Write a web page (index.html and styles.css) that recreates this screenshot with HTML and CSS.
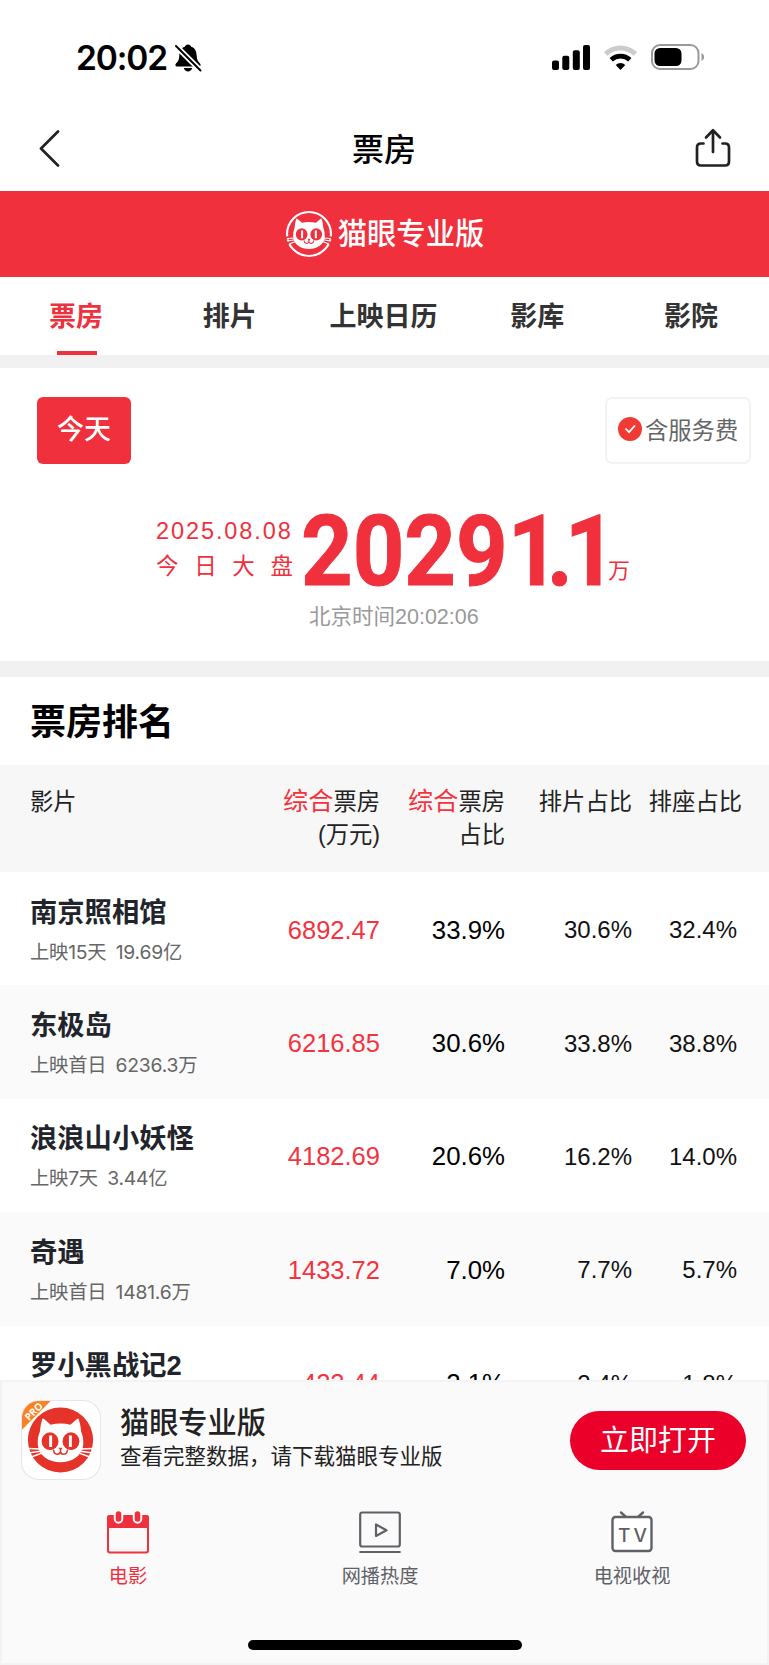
FILE: index.html
```html
<!DOCTYPE html>
<html lang="zh-CN">
<head>
  <meta charset="UTF-8">
  <meta name="viewport" content="width=device-width, initial-scale=1">
  <title>票房</title>
  <link rel="stylesheet" href="styles.css">
</head>
<body>
  <svg class="defs" width="0" height="0">
    <symbol id="cat" viewBox="0 0 80 80">
      <path fill="#fff" d="M21 19Q21.500 17.800 22.800 18.800L29.500 24.500Q39.500 22 49.500 24.500L56.200 18.800Q57.500 17.800 58 19Q60 25 60.500 32Q63 37.500 62.500 45C61.500 56 51 62.500 39.500 62.500S17.500 56 16.500 45Q16 37.500 18.500 32Q19 25 21 19Z"/>
      <g fill="currentColor">
        <ellipse cx="28.900" cy="41.200" rx="8.500" ry="9"/>
        <ellipse cx="50.100" cy="41.200" rx="8.500" ry="9"/>
        <path d="M37.300 47.800h4.400l-2.200 2.600z"/>
      </g>
      <path d="M39.500 49v2.500M32.500 50.500c.5 5 6.500 5 7 1c.5 4 6.500 4 7-1" fill="none" stroke="currentColor" stroke-width="1.500" stroke-linecap="round"/>
      <path d="M29.500 35.500v11.500M49.500 35.500v11.500" stroke="#fff" stroke-width="3"/>
    </symbol>
  </svg>

  <div class="status">
    <div class="time">20:02
      <svg width="28" height="30" viewBox="0 0 28 30">
        <path d="M14 1.500c-1.800 0-2.800 1-3.200 2.300C6.800 5 5.500 8.500 5.300 13c-.2 4-1.300 5.500-3.300 7.500-1.200 1.300-.6 3 1 3h22c1.600 0 2.200-1.700 1-3-2-2-3.100-3.500-3.300-7.500-.2-4.500-1.500-8-5.500-9.200C16.800 2.500 15.800 1.500 14 1.500zM9.800 25h8.400c-.6 2.300-2.200 3.500-4.200 3.500S10.400 27.300 9.800 25z"/>
        <path d="M1.500 2.500L27 28" stroke="#fff" stroke-width="5.500"/>
        <path d="M2 3L26.500 27.500" stroke="#000" stroke-width="2" stroke-linecap="round"/>
      </svg>
    </div>
    <div class="signals">
      <svg width="38" height="25" viewBox="0 0 38 25">
        <rect x="0" y="15.500" width="7" height="9.500" rx="2"/>
        <rect x="10.300" y="10.700" width="7" height="14.300" rx="2"/>
        <rect x="20.800" y="5.200" width="7" height="19.800" rx="2"/>
        <rect x="31" y="0" width="7" height="25" rx="2"/>
      </svg>
      <svg width="33" height="25" viewBox="0 0 33 25">
        <path d="M1.600 9a21.500 21.500 0 0 1 29.800 0" fill="none" stroke="#ccc" stroke-width="5"/>
        <path d="M7.200 14.800a13.500 13.500 0 0 1 18.600 0" fill="none" stroke="#000" stroke-width="4.800"/>
        <path d="M16.500 25l-4.800-5a6.800 6.800 0 0 1 9.600 0z"/>
      </svg>
      <svg width="54" height="26" viewBox="0 0 54 26">
        <rect x="1" y="1" width="46.500" height="24" rx="8" fill="none" stroke="#999" stroke-width="2"/>
        <rect x="3.500" y="4" width="27" height="18" rx="5.500"/>
        <path d="M50.500 9c3.500 1.500 3.500 6.500 0 8z" fill="#999"/>
      </svg>
    </div>
  </div>

  <header class="nav">
    <svg width="22" height="37" viewBox="0 0 22 37"><path d="M20 1.500L3 18.500 20 35.500" fill="none" stroke="#222" stroke-width="2.700" stroke-linecap="round" stroke-linejoin="round"/></svg>
    <h1>票房</h1>
    <svg width="36" height="40" viewBox="0 0 36 40"><path d="M8.500 15.500H6Q2 15.500 2 19.500V33.500Q2 37.500 6 37.500H30Q34 37.500 34 33.500V19.500Q34 15.500 30 15.500H27.500M18 24V2.500M11 9.500L18 2.300 25 9.500" fill="none" stroke="#222" stroke-width="2.700" stroke-linecap="round" stroke-linejoin="round"/></svg>
  </header>

  <div class="brand">
    <svg width="48" height="48" viewBox="0 0 48 48">
      <circle cx="24" cy="24" r="22" fill="none" stroke="#fff" stroke-width="2.200"/>
      <path d="M0 28l9.500-.5M1 33.500l9.500-2.500M48 28l-9.500-.5M47 33.500l-9.500-2.500" stroke="#f0303d" stroke-width="3"/>
      <path d="M2 28.500l8-.5M3 31l8-1.500M4 34l8-3M46 28.500l-8-.5M45 31l-8-1.500M44 34l-8-3" stroke="#fff" stroke-width="1.100"/>
      <use href="#cat" x="-3.200" y="-4.500" width="55" height="56"/>
    </svg>
    <span>猫眼专业版</span>
  </div>

  <nav class="tabs">
    <a class="active">票房</a>
    <a>排片</a>
    <a>上映日历</a>
    <a>影库</a>
    <a>影院</a>
  </nav>

  <section class="overview">
    <div class="filters">
      <button class="today">今天</button>
      <div class="fee">
        <svg width="24" height="24" viewBox="0 0 24 24"><circle cx="12" cy="12" r="12" fill="#f23a34"/><path d="M7.500 11.500l3.500 3.700 6-6.700" fill="none" stroke="#fff" stroke-width="1.800"/></svg>
        <span>含服务费</span>
      </div>
    </div>
    <div class="total">
      <div class="day">
        <p class="date">2025.08.08</p>
        <p class="label"><span>今</span><span>日</span><span>大</span><span>盘</span></p>
      </div>
      <div class="num"><span>2029<i class="one">1</i><i class="dot">.</i>1</span></div>
      <div class="unit">万</div>
    </div>
    <p class="clock">北京时间20:02:06</p>
  </section>

  <section class="ranking">
    <h2>票房排名</h2>
    <div class="row thead">
      <div>影片</div>
      <div><em>综合</em>票房<br>(万元)</div>
      <div><em>综合</em>票房<br>占比</div>
      <div>排片占比</div>
      <div>排座占比</div>
    </div>
    <div class="row">
      <div><h3>南京照相馆</h3><p>上映15天 19.69亿</p></div>
      <div class="box">6892.47</div><div class="share">33.9%</div><div>30.6%</div><div>32.4%</div>
    </div>
    <div class="row">
      <div><h3>东极岛</h3><p>上映首日 6236.3万</p></div>
      <div class="box">6216.85</div><div class="share">30.6%</div><div>33.8%</div><div>38.8%</div>
    </div>
    <div class="row">
      <div><h3>浪浪山小妖怪</h3><p>上映7天 3.44亿</p></div>
      <div class="box">4182.69</div><div class="share">20.6%</div><div>16.2%</div><div>14.0%</div>
    </div>
    <div class="row">
      <div><h3>奇遇</h3><p>上映首日 1481.6万</p></div>
      <div class="box">1433.72</div><div class="share">7.0%</div><div>7.7%</div><div>5.7%</div>
    </div>
    <div class="row">
      <div><h3>罗小黑战记2</h3></div>
      <div class="box">422.44</div><div class="share">2.1%</div><div>2.4%</div><div>1.8%</div>
    </div>
  </section>

  <footer>
    <div class="app">
      <div class="app-icon">
        <svg width="78" height="78" viewBox="0.5 0.5 79 79">
          <circle cx="39.500" cy="40" r="33" fill="#e5332a"/>
          <path d="M0 0H30L0 30z" fill="#fb8224"/>
          <path d="M7 48.500l11 .5M8.500 53l10.500-1.500M10.500 57l9.500-3.500M72 48.500l-11 .5M70.500 53l-10.500-1.500M68.500 57l-9.500-3.500" stroke="#fff" stroke-width="1.500"/>
          <use href="#cat" width="80" height="80"/>
          <text x="0" y="0" transform="translate(7.500 21) rotate(-45)">PRO</text>
        </svg>
      </div>
      <div class="app-text">
        <h4>猫眼专业版</h4>
        <p>查看完整数据，请下载猫眼专业版</p>
      </div>
      <button class="open">立即打开</button>
    </div>
    <div class="bottom-tabs">
      <a class="active">
        <svg width="42" height="43" viewBox="0 0 42 43">
          <rect x="1" y="5" width="40" height="36.500" rx="2" fill="#fafafa" stroke="#f0303d" stroke-width="2"/>
          <path d="M0 17V7q0-3 3-3h36q3 0 3 3v10z" fill="#f0303d"/>
          <path d="M11.500 3.500v4.500M30.500 3.500v4.500" stroke="#fafafa" stroke-width="9.500" stroke-linecap="round"/>
          <path d="M11.500 3v5M30.500 3v5" stroke="#f0303d" stroke-width="5.500" stroke-linecap="round"/>
        </svg>
        <span>电影</span>
      </a>
      <a>
        <svg width="42" height="43" viewBox="0 0 42 43" fill="none" stroke="#5f6166" stroke-width="2.200" stroke-linecap="round" stroke-linejoin="round">
          <rect x="1.200" y="1.500" width="39.600" height="34" rx="2"/>
          <path d="M17 13.500v11.500l10.500-5.700zM1.200 41h39.600"/>
        </svg>
        <span>网播热度</span>
      </a>
      <a>
        <svg class="tv" width="42" height="43" viewBox="0 0 42 43" fill="none" stroke="#5f6166" stroke-width="2.400" stroke-linecap="round" stroke-linejoin="round">
          <path d="M10 1.500l5 4.500M32 1.500l-5 4.500"/>
          <rect x="1.500" y="6" width="39" height="34" rx="3" fill="#fff"/>
          <text x="7" y="30.500">TV</text>
        </svg>
        <span>电视收视</span>
      </a>
    </div>
    <div class="home-bar"></div>
  </footer>
</body>
</html>
```
FILE: styles.css
```css
* { box-sizing: border-box; }
body {
  font-family: "Liberation Sans", "Noto Sans CJK SC", sans-serif;
  margin: 0;
  height: 1665px;
  overflow: hidden;
  position: relative;
  background: #fff;
  color: #222;
}
h1, h2, h3, h4, p { margin: 0; }
svg { display: block; flex: none; }
button { border: 0; padding: 0; font-family: inherit; color: #fff; }
.defs { position: absolute; }

.status {
  height: 114px;
  padding: 0 64px 0 76px;
  display: flex;
  justify-content: space-between;
  align-items: center;
}
.time {
  display: flex;
  align-items: center;
  gap: 7px;
  font: 600 33.5px/40px Inter, sans-serif;
  color: #000;
  letter-spacing: -1.1px;
  padding-top: 2px;
}
.signals { display: flex; align-items: center; gap: 14px; }

.nav {
  height: 77px;
  padding: 0 38px 9px 38px;
  display: flex;
  justify-content: space-between;
  align-items: center;
}
.nav h1 { font-size: 32px; line-height: 40px; font-weight: 500; color: #000; padding: 3px 0 0 13px; }

.brand {
  height: 86px;
  background: #f0303d;
  color: #fff;
  display: flex;
  justify-content: center;
  align-items: center;
  gap: 5px;
}
.brand svg { color: #f0303d; }
.brand span { font-size: 29.3px; line-height: 40px; font-weight: 500; }

.tabs {
  display: flex;
  height: 91px;
  border-bottom: 13px solid #f1f1f1;
}
.tabs a {
  flex: 1;
  text-align: center;
  font-size: 27px;
  line-height: 81px;
  height: 78px;
  font-weight: bold;
  color: #333;
  text-indent: -2px;
}
.tabs .active { color: #f0303d; }
.tabs .active::after {
  content: "";
  display: block;
  width: 40px;
  height: 4px;
  margin: -7px auto 0;
  background: #f0303d;
}

.overview { height: 309px; border-bottom: 16px solid #f1f1f1; padding-top: 29px; }
.filters { display: flex; justify-content: space-between; padding: 0 18px 0 37px; }
.today {
  width: 94px;
  height: 67px;
  border-radius: 6px;
  background: #f0303d;
  font-size: 27px;
  font-weight: 500;
  padding-bottom: 6px;
}
.fee {
  width: 146px;
  height: 67px;
  border: 2px solid #f3f3f3;
  border-radius: 7px;
  display: flex;
  align-items: center;
  gap: 3px;
  padding-left: 11px;
  font-size: 23.3px;
  color: #666;
}
.fee svg { margin-bottom: 3px; }
.fee span { padding-bottom: 3px; }

.total { display: flex; padding: 50px 0 0 156px; height: 138px; color: #f0303d; }
.day { width: 137px; }
.date { font-size: 23.5px; letter-spacing: 1.9px; line-height: 34px; }
.label { display: flex; justify-content: space-between; font-size: 22.5px; line-height: 38px; }
.num { width: 308px; margin-left: 8px; }
.num span {
  display: inline-block;
  font: bold 99px/75px Roboto, sans-serif;
  transform: scaleX(0.91);
  transform-origin: left;
  -webkit-text-stroke: 1px #f0303d;
}
.num i { font-style: normal; }
.num .one { letter-spacing: -14px; }
.num .dot { letter-spacing: -9px; }
.unit { font-size: 22px; line-height: 30px; padding-top: 42px; margin-left: -1px; }
.clock { font-size: 21.5px; line-height: 30px; color: #999; padding-left: 309px; }

.ranking h2 { font-size: 36px; line-height: 92px; height: 88px; padding-left: 30px; color: #000; }
.row {
  display: grid;
  grid-template-columns: 250px 100px 125px 127px 105px;
  align-items: center;
  height: 113.4px;
  padding-left: 30px;
  font-size: 24px;
  color: #111;
}
.row:nth-child(2n+4) { background: #fafafa; }
.row > div { text-align: right; padding-top: 3px; }
.row > div:first-child { text-align: left; padding-top: 7px; }
.row h3 { font-size: 27.3px; line-height: 40px; color: #22242b; }
.row p {
  font: 19.3px/39px Inter, "Noto Sans CJK SC", sans-serif;
  letter-spacing: -0.2px;
  word-spacing: 4px;
  color: #666;
}
.row .box { color: #f5333f; font-size: 25.5px; }
.row .share { font-size: 25.8px; color: #000; }
.row:last-child h3 { padding-bottom: 39px; box-sizing: content-box; }
.row.thead {
  height: 107px;
  background: #f7f7f7;
  align-items: start;
  padding-top: 21px;
  font-size: 23.3px;
  line-height: 33px;
  color: #222;
}
.row.thead > div { padding-top: 0; }
.thead > div:last-child { margin-right: -5px; }
.thead em { font-style: normal; font-size: 25.2px; line-height: 30px; color: #f5333f; }

footer {
  position: absolute;
  left: 0;
  bottom: 0;
  width: 100%;
  height: 285px;
  border: 2px solid #f3f3f3;
  background: #fafafa;
}
.app { display: flex; align-items: center; padding: 18px 21px 0 20px; height: 98px; }
.app-icon {
  width: 78px;
  height: 78px;
  border-radius: 17px;
  overflow: hidden;
  background: #fff;
  box-shadow: 0 0 0 1px #e6e6e6;
  color: #e5332a;
}
.app-icon text { font: bold 10px "Open Sans", sans-serif; fill: #fff; }
.app-text { flex: 1; padding-left: 20px; }
.app-text h4 { font-size: 29.2px; line-height: 35px; font-weight: 500; }
.app-text p { font-size: 21.5px; line-height: 33px; color: #222; }
.open {
  width: 176px;
  height: 59px;
  border-radius: 30px;
  background: #ea0029;
  font-size: 29px;
  padding-bottom: 5px;
}
.bottom-tabs { display: flex; padding: 31px 9px 0 0; }
.bottom-tabs a {
  flex: 1;
  display: flex;
  flex-direction: column;
  align-items: center;
  gap: 9px;
  font-size: 19.2px;
  line-height: 28px;
  color: #5f6166;
}
.bottom-tabs .active { color: #f0303d; }
.tv text { font: 500 19px Inter, sans-serif; letter-spacing: 3px; fill: #5f6166; stroke: none; }
.home-bar { width: 274px; height: 10px; border-radius: 5px; background: #000; margin: 49px auto 0; }
```
